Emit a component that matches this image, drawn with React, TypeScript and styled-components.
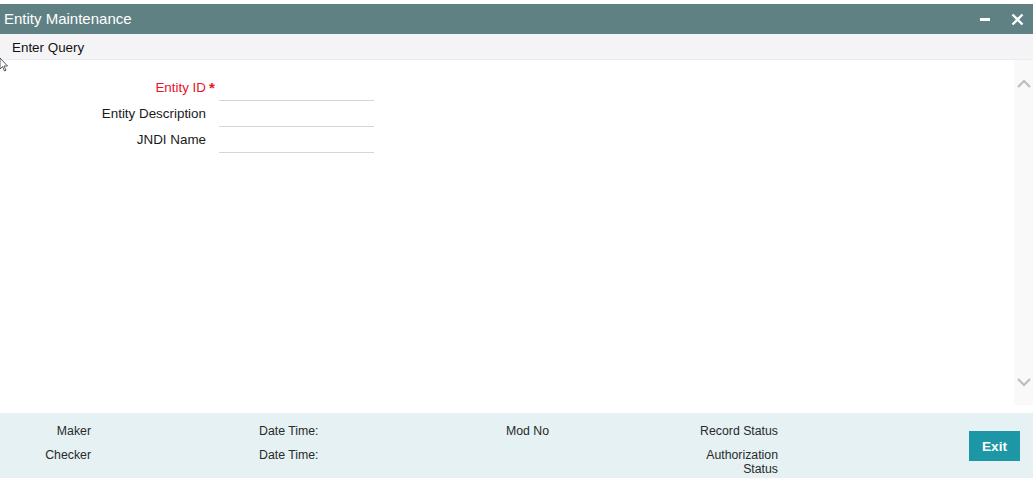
import React from 'react';
import styled, { createGlobalStyle } from 'styled-components';

const Global = createGlobalStyle`
  html, body {
    margin: 0;
    padding: 0;
    background: #ffffff;
  }
  body {
    font-family: "Liberation Sans", Arial, sans-serif;
    color: #1f1f1f;
  }
`;

const Window = styled.div`
  position: relative;
  width: 1033px;
  height: 478px;
  padding-top: 4px;
  box-sizing: border-box;
  display: flex;
  flex-direction: column;
  overflow: hidden;
`;

const TitleBar = styled.div`
  height: 30px;
  flex: none;
  background: #5f8184;
  display: flex;
  align-items: center;
  padding-left: 4px;
  padding-right: 9px;
`;

const Title = styled.div`
  flex: 1;
  color: #ffffff;
  font-size: 15px;
  line-height: 30px;
`;

const WinButtons = styled.div`
  display: flex;
  align-items: center;
  gap: 19px;
`;

const WinButton = styled.span`
  display: flex;
  width: 13px;
  height: 13px;
`;

const Toolbar = styled.div`
  height: 26px;
  flex: none;
  background: #f4f4f6;
  border-bottom: 1px solid #ececee;
  box-sizing: border-box;
  display: flex;
  align-items: center;
  padding-left: 12px;
  padding-top: 1px;
`;

const ToolItem = styled.span`
  font-size: 13.4px;
  color: #111;
`;

const Body = styled.div`
  flex: 1;
  display: flex;
  min-height: 0;
`;

const Content = styled.div`
  flex: 1;
  padding-top: 15px;
`;

const Scrollbar = styled.div`
  width: 19px;
  flex: none;
  margin-bottom: 8px;
  background: #f9f9f9;
  display: flex;
  flex-direction: column;
  justify-content: space-between;
  align-items: center;
  padding: 19px 0 18px;
`;

const Form = styled.div`
  display: grid;
  grid-template-columns: 206px 13px 155px;
  grid-auto-rows: 26px;
`;

const Label = styled.div<{ $required?: boolean }>`
  font-size: 13.4px;
  text-align: right;
  line-height: 26px;
  color: ${p => (p.$required ? '#e8142c' : '#1a1a1a')};
`;

const Mark = styled.div`
  font-size: 15px;
  font-weight: bold;
  line-height: 26px;
  color: #e8142c;
  padding-left: 3px;
`;

const Field = styled.div`
  border-bottom: 1px solid #d6d6d6;
`;

const Footer = styled.div`
  height: 65px;
  flex: none;
  background: #e5f1f3;
  display: flex;
  align-items: flex-start;
  padding-top: 11px;
  box-sizing: border-box;
`;

const FooterCol = styled.div<{ $width: number; $offset?: number; $right?: boolean }>`
  width: ${p => p.$width}px;
  margin-left: ${p => p.$offset ?? 0}px;
  display: flex;
  flex-direction: column;
  gap: 10px;
  text-align: ${p => (p.$right ? 'right' : 'left')};
  flex: none;
`;

const FooterText = styled.div`
  font-size: 12.3px;
  line-height: 14px;
  color: #2a2a2a;
`;

const ExitButton = styled.button`
  margin-left: 191px;
  margin-top: 7px;
  width: 51px;
  height: 30px;
  border: none;
  background: #1d96a5;
  color: #ffffff;
  font-family: "Liberation Sans", Arial, sans-serif;
  font-weight: bold;
  font-size: 13.6px;
  padding: 0;
  cursor: pointer;
`;

const Cursor = styled.svg`
  position: absolute;
  left: -1px;
  top: 57px;
`;

const Chevron = ({ up }: { up?: boolean }) => (
  <svg width="14" height="9" viewBox="0 0 14 9">
    <path
      d={up ? 'M1 8 L7 2 L13 8' : 'M1 1 L7 7 L13 1'}
      fill="none"
      stroke="#bdbdbd"
      strokeWidth="2.2"
    />
  </svg>
);

export default function App() {
  return (
    <>
      <Global />
      <Window>
        <TitleBar>
          <Title>Entity Maintenance</Title>
          <WinButtons>
            <WinButton>
              <svg width="13" height="13" viewBox="0 0 13 13">
                <rect x="1" y="5" width="10" height="3" fill="#ffffff" />
              </svg>
            </WinButton>
            <WinButton>
              <svg width="13" height="13" viewBox="0 0 13 13">
                <path d="M1.5 1.5 L11.5 11.5 M11.5 1.5 L1.5 11.5" stroke="#ffffff" strokeWidth="2.4" />
              </svg>
            </WinButton>
          </WinButtons>
        </TitleBar>
        <Toolbar>
          <ToolItem>Enter Query</ToolItem>
        </Toolbar>
        <Body>
          <Content>
            <Form>
              <Label $required>Entity ID</Label>
              <Mark>*</Mark>
              <Field />
              <Label>Entity Description</Label>
              <Mark />
              <Field />
              <Label>JNDI Name</Label>
              <Mark />
              <Field />
            </Form>
          </Content>
          <Scrollbar>
            <Chevron up />
            <Chevron />
          </Scrollbar>
        </Body>
        <Footer>
          <FooterCol $width={91} $right>
            <FooterText>Maker</FooterText>
            <FooterText>Checker</FooterText>
          </FooterCol>
          <FooterCol $width={247} $offset={168}>
            <FooterText>Date Time:</FooterText>
            <FooterText>Date Time:</FooterText>
          </FooterCol>
          <FooterCol $width={120}>
            <FooterText>Mod No</FooterText>
          </FooterCol>
          <FooterCol $width={152} $right>
            <FooterText>Record Status</FooterText>
            <FooterText>
              Authorization
              <br />
              Status
            </FooterText>
          </FooterCol>
          <ExitButton>Exit</ExitButton>
        </Footer>
        <Cursor width="9" height="15" viewBox="0 0 9 15">
          <path d="M1 1 L1 12 L3.5 9.5 L5.5 14 L7 13.3 L5 9 L8.5 9 Z" fill="#ffffff" stroke="#333" strokeWidth="0.8" />
        </Cursor>
      </Window>
    </>
  );
}
